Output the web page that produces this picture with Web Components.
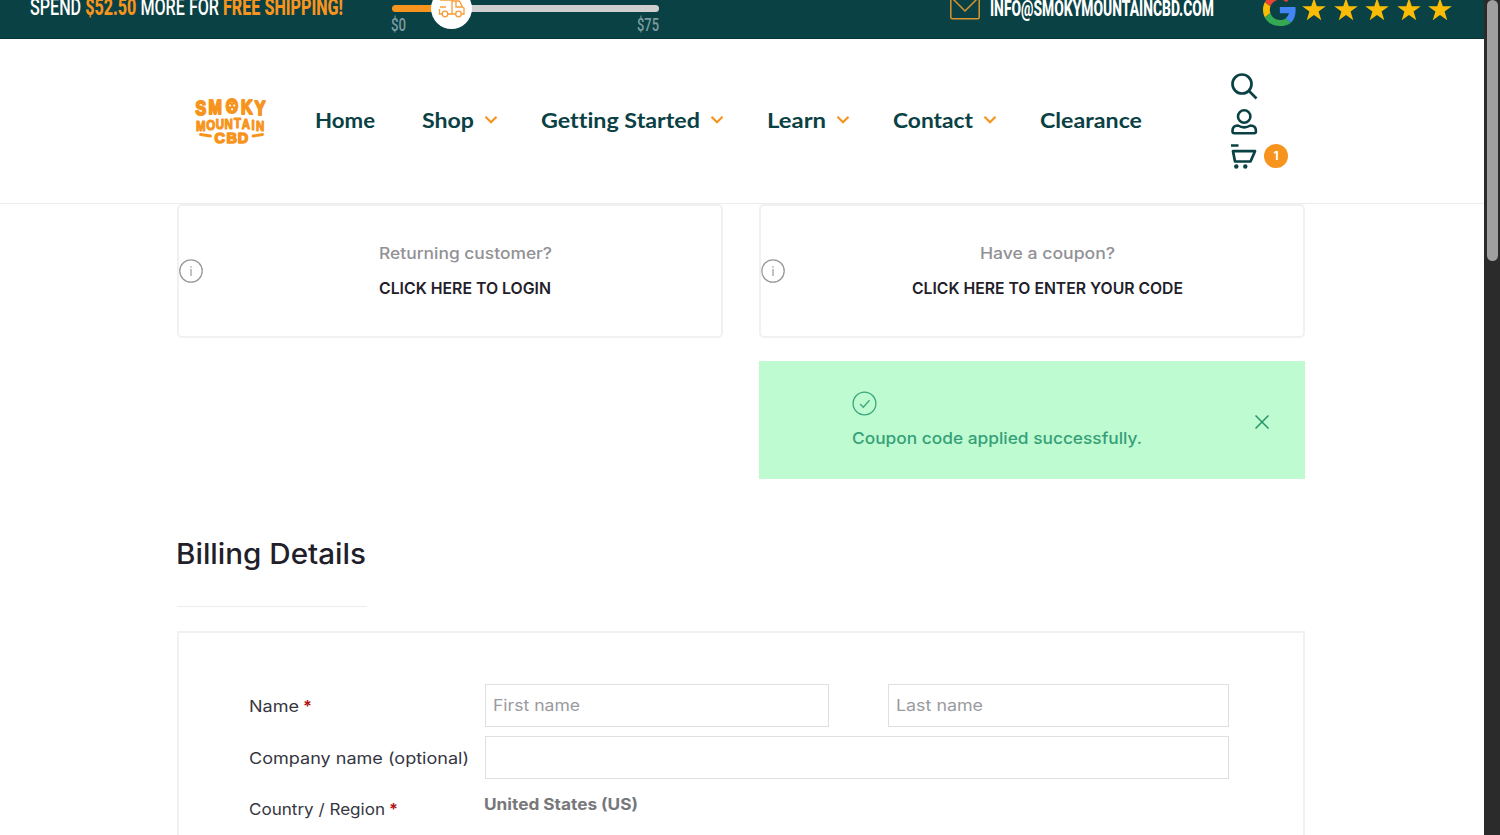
<!DOCTYPE html>
<html lang="en">
<head>
<meta charset="utf-8">
<title>Checkout</title>
<style>
  html, body { margin: 0; height: 100%; overflow: hidden; }
  body { background: #fff; font-family: Inter, "Open Sans", sans-serif; font-size: 16px; color: #1f2029; }
</style>
</head>
<body>
<checkout-page></checkout-page>

<script>
// attaches an open shadow root with the given markup
class BaseElement extends HTMLElement {
  connectedCallback() {
    if (this.shadowRoot) return;
    this.attachShadow({ mode: 'open' });
    this.shadowRoot.innerHTML = this.render();
  }
}

class PromoText extends BaseElement {
  render() {
    return `
      <style>
        :host { display: block; width: 313px; font: 500 23.5px/28px Roboto, sans-serif; color: #fff; }
        b { font-weight: 800; color: #f7941d; }
      </style>
      <fit-text w="313">SPEND <b>$52.50</b> MORE FOR <b>FREE SHIPPING!</b></fit-text>
    `;
  }
}

class ShippingMeter extends BaseElement {
  render() {
    return `
      <style>
        :host { display: block; position: relative; width: 267px; font: 500 18px/18px Roboto, sans-serif; color: #7c9ca0; }
        .track { height: 7px; border-radius: 4px; margin-top: 5px; background: linear-gradient(90deg, #f7941d 50px, #d0cfd0 50px); }
        .ends { display: flex; justify-content: space-between; margin: 4px 0 0 -1px; }
        .knob { position: absolute; left: 39px; top: -12px; width: 41px; height: 41px; border-radius: 50%; background: #fff; }
        svg { display: block; margin: 8px 0 0 7px; }
      </style>
      <div class="track"></div>
      <div class="ends"><fit-text w="15">$0</fit-text><fit-text w="22">$75</fit-text></div>
      <div class="knob">
        <svg width="28" height="22" viewBox="0 0 28 22" fill="none" stroke="#f79c38" stroke-width="1.3">
          <path d="M2 4h12v14H10M2 11h6M1.500 13v5H4M14 5h6.500q1 0 1.500 1l2.500 5 1.500 1v6h-2.500M18 5v6h6.500M14 18h3.500"/>
          <circle cx="7" cy="18" r="2.800"/><circle cx="20.500" cy="18" r="2.800"/>
        </svg>
      </div>
    `;
  }
}

class MailLink extends BaseElement {
  render() {
    return `
      <style>
        :host { display: flex; gap: 10px; font: 800 22.5px/28px Roboto, sans-serif; color: #fff; }
        svg { display: block; margin-top: -4px; }
        fit-text { margin-top: -6px; }
      </style>
      <svg width="30" height="24" viewBox="0 0 30 24" fill="none" stroke="#d8942f" stroke-width="1.500">
        <rect x=".8" y=".8" width="28.400" height="22" rx="1.500"/><path d="M1 1l14 14L29 1"/>
      </svg>
      <fit-text w="224"><slot></slot></fit-text>
    `;
  }
}

class GoogleRating extends BaseElement {
  render() {
    const star = '<svg width="24" height="23" viewBox="0 0 24 23"><path fill="#fbbc05" d="M12 0l2.800 8.300h9L16.600 13.500l2.700 8.800L12 17l-7.300 5.300 2.700-8.800L.2 8.300h9z"/></svg>';
    return `
      <style>
        :host { display: flex; }
        svg { display: block; }
        .g { margin-top: -7px; }
        .stars { display: flex; gap: 7.500px; margin: -2px 0 0 6px; }
      </style>
      <svg class="g" width="33" height="33" viewBox="0 0 47 47">
        <path fill="#ea4335" d="M24 9.500c3.500 0 6.700 1.200 9.200 3.600l6.900-6.900C35.900 2.400 30.500 0 24 0 14.600 0 6.500 5.400 2.600 13.200l8 6.200C12.400 13.700 17.700 9.500 24 9.500z"/>
        <path fill="#4285f4" d="M46.500 24.500c0-1.600-.2-3.100-.4-4.500H24v9h12.900c-.6 3-2.300 5.500-4.800 7.200l7.700 6c4.600-4.200 6.700-10.800 6.700-17.700z"/>
        <path fill="#fbbc05" d="M10.500 28.600c-.5-1.500-.8-3-.8-4.600s.3-3.100.8-4.600l-8-6.200C.9 16.500 0 20.100 0 24s.9 7.500 2.600 10.800z"/>
        <path fill="#34a853" d="M24 47c6.500 0 11.900-1.500 15.800-4.800l-7.700-6C30 37.700 27.200 38.500 24 38.500c-6.300 0-11.600-4.200-13.500-9.900l-8 6.200C6.500 42.600 14.600 47 24 47z"/>
      </svg>
      <div class="stars">${star.repeat(5)}</div>
    `;
  }
}

class TopBar extends BaseElement {
  render() {
    return `
      <style>
        :host { display: flex; align-items: flex-start; height: 39px; overflow: hidden; background: #0a4144; box-sizing: border-box; border-bottom: 1px solid #083538; }
        promo-text { margin: -7px 49px 0 30px; }
        mail-link { margin-left: 291px; }
        google-rating { margin-left: 49px; }
      </style>
      <promo-text></promo-text>
      <shipping-meter></shipping-meter>
      <mail-link>INFO@SMOKYMOUNTAINCBD.COM</mail-link>
      <google-rating></google-rating>
    `;
  }
}

class SiteLogo extends BaseElement {
  render() {
    return `
      <style>
        :host { display: block; width: 76px; height: 48px; }
        svg { display: block; }
        text { font-family: "Liberation Sans", sans-serif; font-weight: 700; fill: #f7941d; stroke: #f7941d; stroke-linejoin: round; }
      </style>
      <svg width="76" height="48" viewBox="0 0 76 48">
        <text transform="scale(1 1.220)" x="1.500 14.500 31.800 47 60.800" y="14.600 13.600 13.300 13.600 14.600" font-size="16" stroke-width="1.600">SMOKY</text>
        <circle cx="38" cy="10" r="4.500" fill="#f7941d"/>
        <g fill="#fff"><circle cx="36" cy="8.500" r="1.100"/><circle cx="40.200" cy="8.500" r="1.100"/><circle cx="38.100" cy="12.300" r="1.100"/></g>
        <text transform="scale(1 1.200)" x="2 12.200 21.800 30.600 40 47.800 57.500 62" y="28.200 27.400 26.800 26.300 26.200 26.700 27.400 28.200" font-size="11.500" stroke-width="1">MOUNTAIN</text>
        <text x="20.500 32.500 43.800" y="45.500" font-size="14.500" stroke-width="1.500">CBD</text>
        <path d="M6.500 37.500l10 1.500M59 39l9.500-1.500" stroke="#f7941d" stroke-width="2.800" stroke-linecap="round"/>
      </svg>
    `;
  }
}

class NavItem extends BaseElement {
  render() {
    const chevron = this.hasAttribute('menu')
      ? '<svg width="14" height="10" viewBox="0 0 14 10" fill="none" stroke="#f7941d" stroke-width="2.200"><path d="M1.500 1.800L7 7.300l5.500-5.500"/></svg>'
      : '';
    return `
      <style>
        :host { display: flex; align-items: center; gap: 10px; }
        svg { display: block; }
      </style>
      <fit-text w="${this.getAttribute('w')}"><slot></slot></fit-text>${chevron}
    `;
  }
}

class HeaderTools extends BaseElement {
  render() {
    return `
      <style>
        :host { display: flex; flex-direction: column; gap: 9px; }
        svg { display: block; }
        .cart { display: flex; gap: 7px; }
        .badge { width: 24px; height: 24px; border-radius: 50%; background: #f7941d; color: #fff; font: 700 12px/24px Inter, sans-serif; text-align: center; }
      </style>
      <svg width="27" height="27" viewBox="0 0 27 27" fill="none" stroke="#0a4144" stroke-width="2.700"><circle cx="11" cy="11" r="9.500"/><path d="M18 18l7.500 7.500"/></svg>
      <svg width="27" height="26" viewBox="0 0 27 26" fill="none" stroke="#0a4144" stroke-width="2.600"><circle cx="13.200" cy="7.500" r="6.200"/><path d="M7 16.500c-3.500.3-5.500 2.200-5.500 5v1q0 1.700 1.700 1.700h20q1.700 0 1.700-1.700v-1c0-2.800-2-4.700-5.500-5-4 2.400-8.400 2.400-12.400 0z" stroke-linejoin="round"/></svg>
      <div class="cart">
        <svg width="26" height="26" viewBox="0 0 26 26" fill="none" stroke="#0a4144" stroke-width="2.700"><path d="M0 1.500h7.500M2 7.200h22L19.500 17.500H4L2 7.200z" stroke-linejoin="round"/><circle cx="5.300" cy="22.500" r="2.200" fill="#0a4144" stroke="none"/><circle cx="14.300" cy="22.500" r="2.200" fill="#0a4144" stroke="none"/></svg>
        <span class="badge">1</span>
      </div>
    `;
  }
}

class SiteHeader extends BaseElement {
  render() {
    return `
      <style>
        :host { display: flex; align-items: center; height: 165px; box-sizing: border-box; border-bottom: 1px solid #ececec; padding-left: 194px; background: #fff; }
        nav { display: flex; gap: 43px; margin: -2px 0 0 45px; font: 700 21px/26px Lato, sans-serif; font-variant-ligatures: none; color: #0a4144; }
        nav :first-child { margin-right: 4px; }
        header-tools { margin-left: 89px; }
      </style>
      <site-logo></site-logo>
      <nav>
        <nav-item w="60">Home</nav-item>
        <nav-item w="52" menu>Shop</nav-item>
        <nav-item w="159" menu>Getting Started</nav-item>
        <nav-item w="59" menu>Learn</nav-item>
        <nav-item w="80" menu>Contact</nav-item>
        <nav-item w="102">Clearance</nav-item>
      </nav>
      <header-tools></header-tools>
    `;
  }
}

class InfoCard extends BaseElement {
  render() {
    return `
      <style>
        :host { display: flex; align-items: center; box-sizing: border-box; height: 134px; border: 2px solid #f1f1f1; border-radius: 5px; }
        svg { display: block; flex: none; }
        .text { flex: 1; display: flex; flex-direction: column; align-items: center; margin-left: 6px; line-height: 35px; font-weight: 500; color: #919196; }
        .action { font-weight: 600; color: #1f2029; }
      </style>
      <svg width="24" height="24" viewBox="0 0 24 24" fill="none" stroke="#999"><circle cx="12" cy="12" r="11.200" stroke-width="1.300"/><path d="M12 10v7M12 7.200v1.500" stroke-width="1.200"/></svg>
      <div class="text">
        <fit-text w="${this.getAttribute('lead-width')}">${this.getAttribute('lead')}</fit-text>
        <fit-text class="action" w="${this.getAttribute('w')}"><slot></slot></fit-text>
      </div>
    `;
  }
}

class SuccessNotice extends BaseElement {
  render() {
    return `
      <style>
        :host { display: flex; align-items: center; justify-content: space-between; box-sizing: border-box; height: 118px; padding: 0 36px 0 93px; background: #befbd1; color: #35a078; font-weight: 500; line-height: 24px; }
        svg { display: block; }
        .msg { display: flex; flex-direction: column; gap: 10px; padding-top: 1px; }
        .close { margin-top: 4px; }
      </style>
      <div class="msg">
        <svg width="25" height="25" viewBox="0 0 25 25" fill="none" stroke="#3ba67e" stroke-width="1.300"><circle cx="12.500" cy="12.500" r="11.400"/><path d="M8 13l3.300 3.200 6.200-7"/></svg>
        <fit-text w="290"><slot></slot></fit-text>
      </div>
      <svg class="close" width="14" height="14" viewBox="0 0 14 14" stroke="#279469" stroke-width="1.500"><path d="M.5.5l13 13M13.500.5l-13 13"/></svg>
    `;
  }
}

class SectionTitle extends BaseElement {
  render() {
    return `
      <style>
        :host { display: block; width: 190px; height: 71px; box-sizing: border-box; border-bottom: 1px solid #ececec; font-size: 28px; font-weight: 500; line-height: 36px; }
        fit-text { margin-left: -1px; }
      </style>
      <fit-text w="190"><slot></slot></fit-text>
    `;
  }
}

class FormRow extends BaseElement {
  render() {
    const star = this.hasAttribute('required') ? '<b>*</b>' : '';
    return `
      <style>
        :host { display: grid; grid-template-columns: 236px 744px; height: 43px; }
        .label { display: flex; gap: 4px; line-height: 44px; color: #35363f; }
        b { color: #b01212; }
        .fields { display: flex; justify-content: space-between; }
      </style>
      <div class="label"><fit-text w="${this.getAttribute('w')}">${this.getAttribute('label')}</fit-text>${star}</div>
      <div class="fields"><slot></slot></div>
    `;
  }
}

class TextField extends BaseElement {
  render() {
    const hint = this.getAttribute('hint');
    return `
      <style>
        :host { display: block; box-sizing: border-box; height: 43px; padding-left: 7px; border: 1px solid #dfdfdf; line-height: 41px; color: #9a9a9f; }
      </style>
      ${hint ? `<fit-text w="87">${hint}</fit-text>` : ''}
    `;
  }
}

class PageScrollbar extends BaseElement {
  render() {
    return `
      <style>
        :host { display: block; width: 16px; background: #2b2b2b; }
        div { height: 261px; margin: 0 2px 0 3px; border-radius: 6px; background: #9f9f9f; }
      </style>
      <div></div>
    `;
  }
}

class CheckoutPage extends BaseElement {
  render() {
    return `
      <style>
        :host { display: flex; height: 835px; overflow: hidden; }
        .page { width: 1484px; }
        main { width: 1128px; margin-left: 177px; }
        .notices { display: grid; grid-template-columns: 546px 546px; column-gap: 36px; row-gap: 23px; }
        success-notice { grid-column: 2; }
        section-title { margin-top: 57px; }
        .form { display: flex; flex-direction: column; gap: 8.500px; margin-top: 24px; height: 260px; box-sizing: border-box; padding: 51px 0 0 70px; border: 2px solid #f1f1f1; }
        .first { width: 344px; }
        .last { width: 341px; }
        .full { width: 744px; }
        .country { font-weight: 700; color: #77787b; line-height: 35px; margin-left: -1px; }
      </style>
      <div class="page">
        <top-bar></top-bar>
        <site-header></site-header>
        <main>
          <div class="notices">
            <info-card lead="Returning customer?" lead-width="173" w="172">CLICK HERE TO LOGIN</info-card>
            <info-card lead="Have a coupon?" lead-width="135" w="271">CLICK HERE TO ENTER YOUR CODE</info-card>
            <success-notice>Coupon code applied successfully.</success-notice>
          </div>
          <section-title>Billing Details</section-title>
          <div class="form">
            <form-row label="Name" w="50" required>
              <text-field class="first" hint="First name"></text-field>
              <text-field class="last" hint="Last name"></text-field>
            </form-row>
            <form-row label="Company name (optional)" w="220">
              <text-field class="full"></text-field>
            </form-row>
            <form-row label="Country / Region" w="136" required>
              <fit-text class="country" w="154">United States (US)</fit-text>
            </form-row>
          </div>
        </main>
      </div>
      <page-scrollbar></page-scrollbar>
    `;
  }
}

// one line of text squeezed or stretched to w pixels
class FitText extends BaseElement {
  render() {
    return `
      <style>
        :host { display: block; width: ${this.getAttribute('w')}px; white-space: nowrap; }
        span { display: inline-block; vertical-align: top; transform-origin: 0 50%; }
      </style>
      <span><slot></slot></span>
    `;
  }
  connectedCallback() {
    super.connectedCallback();
    const span = this.shadowRoot.querySelector('span');
    const natural = span.getBoundingClientRect().width;
    if (natural) span.style.transform = `scaleX(${this.getAttribute('w') / natural})`;
  }
}

customElements.define('checkout-page', CheckoutPage);
customElements.define('top-bar', TopBar);
customElements.define('promo-text', PromoText);
customElements.define('shipping-meter', ShippingMeter);
customElements.define('mail-link', MailLink);
customElements.define('google-rating', GoogleRating);
customElements.define('site-header', SiteHeader);
customElements.define('site-logo', SiteLogo);
customElements.define('nav-item', NavItem);
customElements.define('header-tools', HeaderTools);
customElements.define('info-card', InfoCard);
customElements.define('success-notice', SuccessNotice);
customElements.define('section-title', SectionTitle);
customElements.define('form-row', FormRow);
customElements.define('text-field', TextField);
customElements.define('page-scrollbar', PageScrollbar);
// last, so that every font is settled when the text is measured
customElements.define('fit-text', FitText);
</script>
</body>
</html>
